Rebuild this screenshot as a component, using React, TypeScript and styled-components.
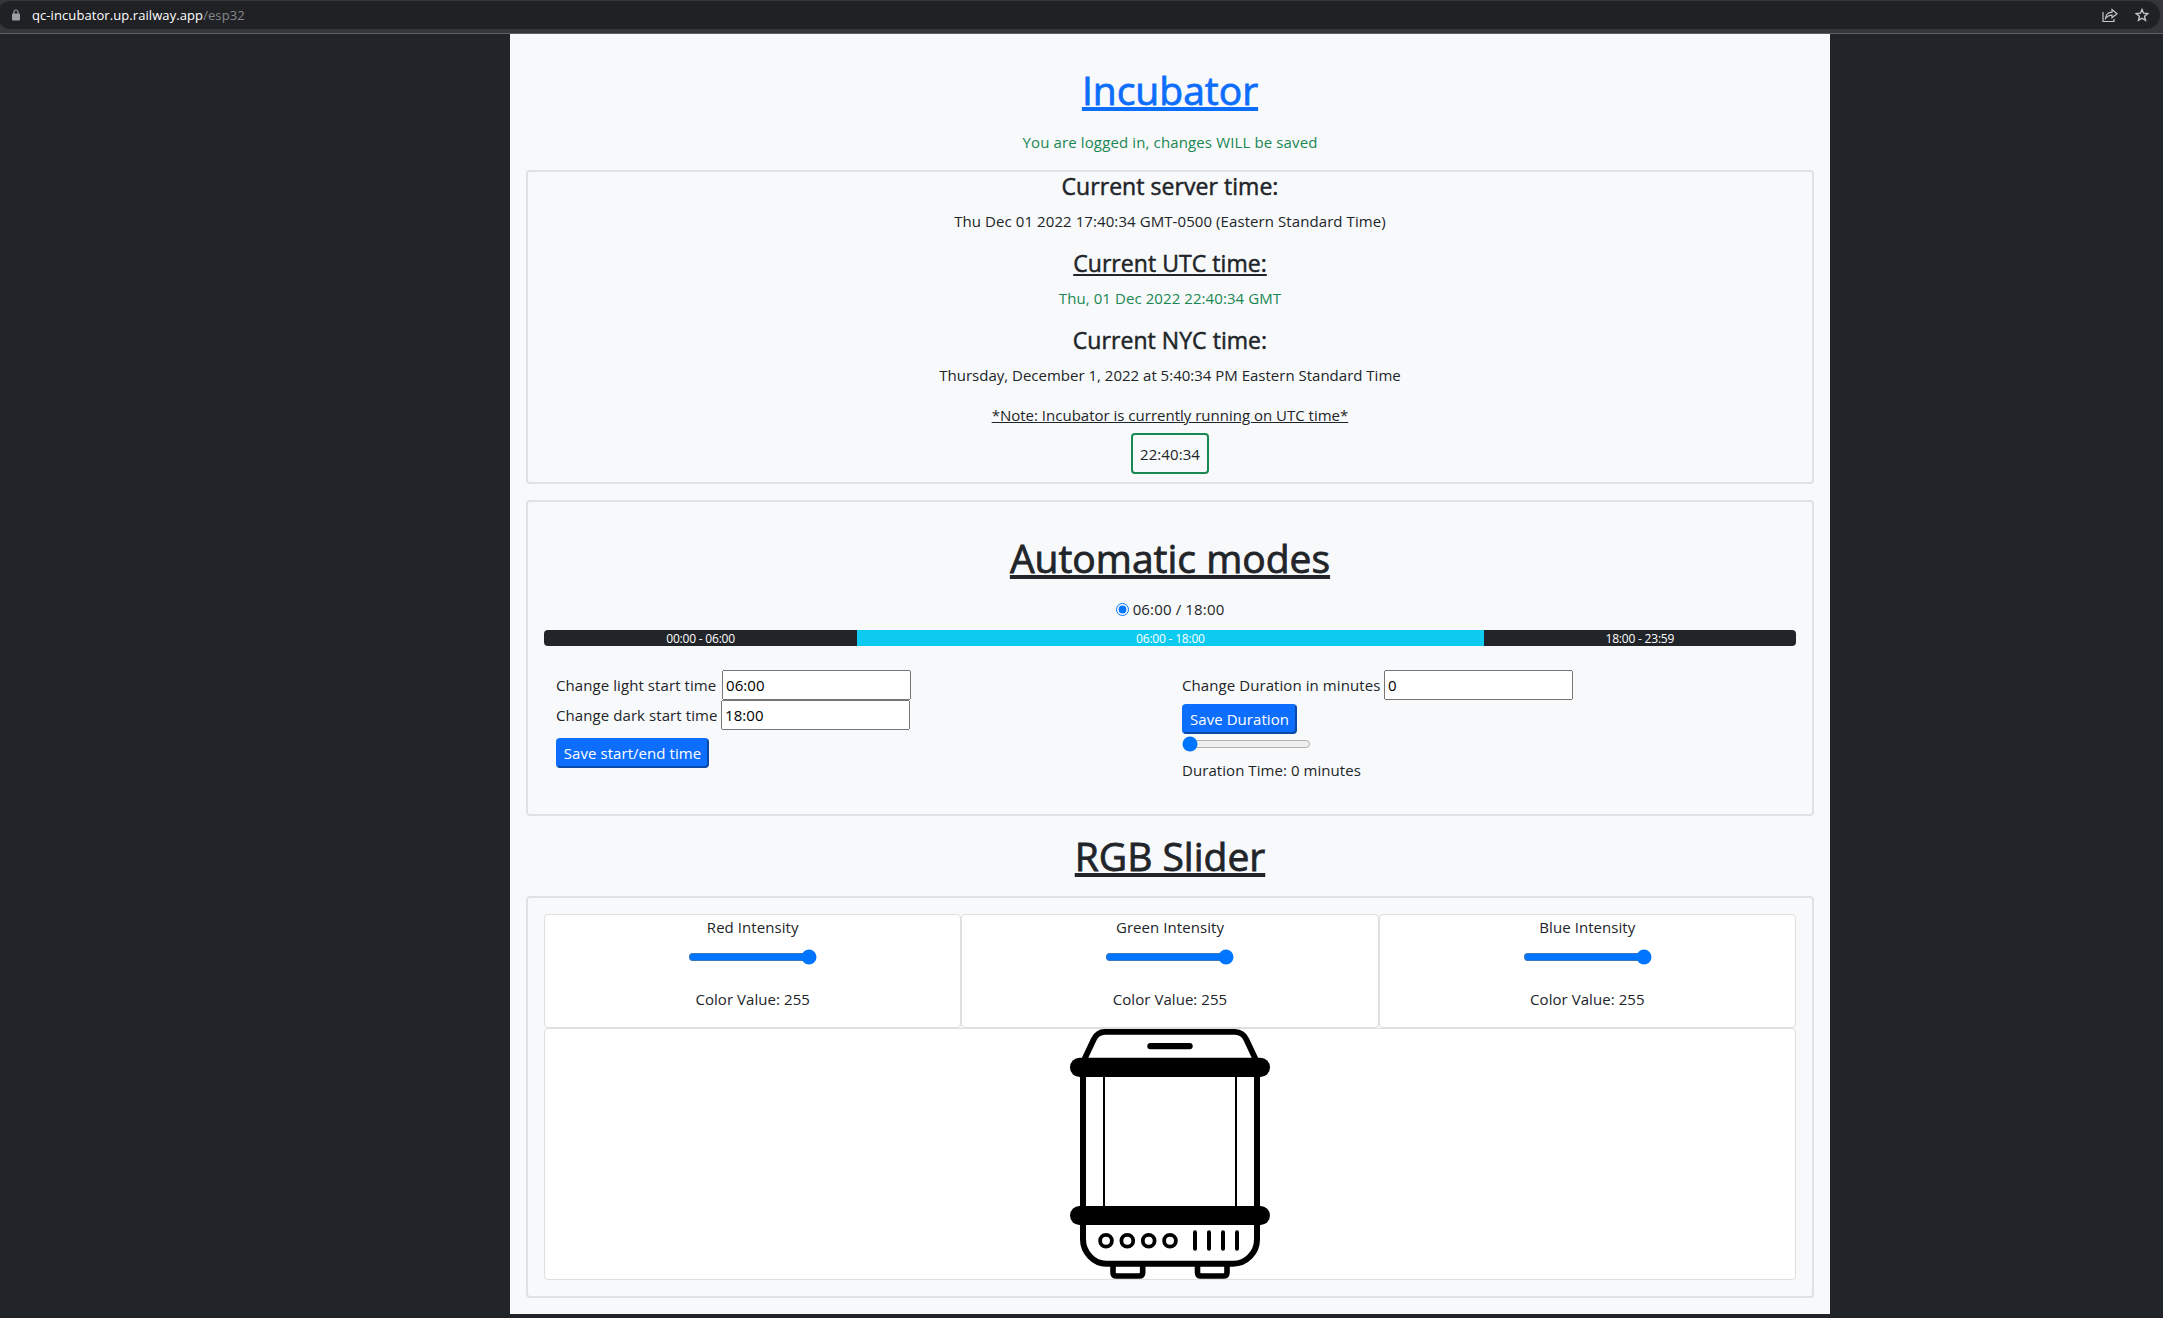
import React, { useState } from "react";
import styled, { createGlobalStyle } from "styled-components";

const GlobalStyle = createGlobalStyle`
  *, *::before, *::after { box-sizing: border-box; }
  html { background: #212529; }
  body {
    margin: 0;
    background: #212529;
    color: #212529;
    font: 400 15px/24px "Open Sans", "Noto Sans", sans-serif;
    letter-spacing: 0.06px;
  }
  input, button { margin: 0; font: inherit; letter-spacing: inherit; }
`;

const Screen = styled.div`
  height: 1318px;
  overflow: hidden;
  border-bottom: 1px solid #231f25;
`;
const Toolbar = styled.header`
  height: 34px;
  padding: 1px 3px 0 0;
  background: #35363a;
  border-bottom: 1px solid #5f6063;
`;
const AddressBar = styled.div`
  display: flex;
  align-items: center;
  height: 28px;
  margin-left: -3px;
  padding: 0 11px 0 15px;
  border-radius: 14px;
  background: #202124;
  color: #9aa0a6;
`;
const Url = styled.span`
  flex: 1;
  margin-left: 12px;
  font-size: 13px;
  line-height: 20px;
  letter-spacing: 0.08px;
  color: #85888c;
`;
const Host = styled.span`color: #fff;`;
const Actions = styled.div`display: flex; align-items: center; gap: 17px; color: #c4c7c9;`;

const Container = styled.main`
  width: 1320px;
  height: 1280px;
  margin: 0 0 0 510px;
  padding: 32px 16px 0;
  background: #f8f9fa;
`;
const Title = styled.h1<{ $color?: string; $top?: number; $bottom?: number }>`
  margin: ${(p) => p.$top ?? 0}px 0 ${(p) => p.$bottom ?? 0}px;
  height: 48px;
  text-align: center;
  font-size: 39px;
  line-height: 48px;
  font-weight: 500;
  letter-spacing: 0;
  -webkit-text-stroke: 0.8px currentColor;
  color: ${(p) => p.$color ?? "#212529"};
  text-decoration: underline;
  text-decoration-thickness: 4px;
  text-underline-offset: 2px;
  text-decoration-skip-ink: none;
`;
const Line = styled.p<{ $color?: string; $track?: number; $underline?: boolean }>`
  margin: 0 0 16px;
  text-align: center;
  color: ${(p) => p.$color ?? "inherit"};
  letter-spacing: ${(p) => p.$track ?? 0.08}px;
  text-decoration: ${(p) => (p.$underline ? "underline" : "none")};
  text-underline-offset: 1px;
`;
const Subtitle = styled.h4<{ $underline?: boolean }>`
  margin: 0 0 8px;
  text-align: center;
  font-size: 23px;
  line-height: 29px;
  font-weight: 500;
  letter-spacing: 0.05px;
  -webkit-text-stroke: 0.5px currentColor;
  text-decoration: ${(p) => (p.$underline ? "underline" : "none")};
  text-decoration-thickness: 2px;
  text-underline-offset: 2px;
`;
const Panel = styled.section<{ $height: number; $pad?: string; $mt?: number }>`
  height: ${(p) => p.$height}px;
  margin-top: ${(p) => p.$mt ?? 0}px;
  padding: ${(p) => p.$pad ?? "0"};
  border: 2px solid #dee2e6;
  border-radius: 4px;
`;
const Clock = styled.div`
  width: 78px;
  height: 41px;
  margin: -10px auto 0;
  border: 2px solid #198754;
  border-radius: 4px;
  text-align: center;
  line-height: 38px;
`;
const Mode = styled.label`
  display: flex;
  justify-content: center;
  align-items: center;
  gap: 4px;
  height: 24px;
  margin-top: 15px;
  letter-spacing: 0.15px;
`;
const Radio = styled.input`width: 13px; height: 13px;`;
const Progress = styled.div`
  display: flex;
  height: 16px;
  margin-top: 9px;
  border-radius: 4px;
  overflow: hidden;
  font-size: 12px;
  line-height: 17px;
  letter-spacing: -0.2px;
  color: #fff;
  text-align: center;
`;
const Segment = styled.div<{ $share: number; $light?: boolean }>`
  flex: ${(p) => p.$share} 1 0;
  background: ${(p) => (p.$light ? "#0dcaf0" : "#212529")};
`;
const Settings = styled.div`
  display: grid;
  grid-template-columns: 1fr 1fr;
  padding-top: 24px;
`;
const Column = styled.div`padding: 0 12px;`;
const Field = styled.label`
  display: flex;
  align-items: center;
  gap: 4px;
  height: 30px;
`;
const FieldLabel = styled.span<{ $width: number }>`
  width: ${(p) => p.$width}px;
  white-space: nowrap;
  letter-spacing: 0.08px;
`;
const TextInput = styled.input`
  width: 189px;
  height: 30px;
  padding: 1px 2px;
`;
const SaveButton = styled.button<{ $width: number; $top: number }>`
  display: block;
  width: ${(p) => p.$width}px;
  height: 30px;
  margin-top: ${(p) => p.$top}px;
  padding: 0;
  border: 2px outset #0d6efd;
  border-radius: 4px;
  background: #0d6efd;
  color: #fff;
  line-height: 26px;
`;
const Range = styled.input`
  display: block;
  width: 129px;
  height: 16px;
`;
const Duration = styled.div`padding-top: 2px;`;
const DurationText = styled.p`margin: 6px 0 0;`;

const Cards = styled.div`display: grid; grid-template-columns: repeat(3, 1fr);`;
const Card = styled.div`
  display: flex;
  flex-direction: column;
  align-items: center;
  height: 114px;
  border: 1px solid #dfdfdf;
  border-radius: 4px;
  background: #fff;
`;
const CardLine = styled.span<{ $top?: number }>`
  margin-top: ${(p) => p.$top ?? 0}px;
`;
const CardRange = styled(Range)`margin-top: 10px;`;
const Picture = styled(Card)`height: 252px;`;

const Incubator = () => (
  <svg width="200" height="250" viewBox="0 0 200 250" fill="none" stroke="#000">
    <path d="M14.5 30 23.7 10.5Q27.2 3 35 2.9H165Q172.8 3 176.3 10.5L185.5 30" strokeWidth="5.8" />
    <rect x="77.3" y="14" width="45.4" height="6.2" rx="3" fill="#000" stroke="none" />
    <path d="M13 45V210.5Q13 220 20 227.5T37 234.7H163Q173 234.7 180 227.5T187 210.5V45" strokeWidth="6" />
    <path d="M34 45V180M166 45V180" strokeWidth="2" />
    <g fill="#000" stroke="none">
      <rect x="0" y="28.7" width="200" height="19.3" rx="9.6" />
      <rect x="0" y="177" width="200" height="19" rx="9.5" />
    </g>
    <g strokeWidth="3.8">
      {[36, 57.3, 78.7, 100].map((x) => <circle key={x} cx={x} cy="211.7" r="5.9" />)}
    </g>
    <g strokeWidth="4" strokeLinecap="round">
      {[125, 139, 153, 167].map((x) => <path key={x} d={`M${x} 203.3V219.7`} />)}
    </g>
    <path d="M43 237V243.5Q43 247 46.5 247H69Q72.7 247 72.7 243.5V237M127.5 237V243.5Q127.5 247 131 247H153.5Q157 247 157 243.5V237" strokeWidth="5.6" />
  </svg>
);

const LockIcon = () => (
  <svg width="8" height="12" viewBox="0 0 8 12">
    <path d="M2 5V3a2 2 0 0 1 4 0v2" fill="none" stroke="currentColor" strokeWidth="1.2" />
    <rect y="4.5" width="8" height="7" rx="1" fill="currentColor" />
  </svg>
);
const ShareIcon = () => (
  <svg width="16" height="15" viewBox="0 0 16 15" fill="none" stroke="currentColor" strokeWidth="1.2">
    <path d="M1 4V13.5H12V11" />
    <path d="M3.5 10.5Q4 4.5 10 4.2V1.5L15 5.8 10 9.8V7.2Q6 7.2 3.5 10.5Z" />
  </svg>
);
const StarIcon = () => (
  <svg width="14" height="14" viewBox="0 0 14 14" fill="none" stroke="currentColor" strokeWidth="1.4">
    <path d="M7 1.5 8.6 5.2 12.7 5.6 9.6 8.3 10.5 12.3 7 10.2 3.5 12.3 4.4 8.3 1.3 5.6 5.4 5.2Z" />
  </svg>
);

function ColorCard({ name }: { name: string }) {
  const [value, setValue] = useState(255);
  return (
    <Card>
      <CardLine>{name} Intensity</CardLine>
      <CardRange type="range" min={0} max={255} value={value} onChange={(e) => setValue(Number(e.target.value))} />
      <CardLine $top={22}>Color Value: {value}</CardLine>
    </Card>
  );
}

export default function App() {
  const [minutes, setMinutes] = useState(0);
  return (
    <Screen>
      <GlobalStyle />
      <Toolbar>
        <AddressBar>
          <LockIcon />
          <Url><Host>qc-incubator.up.railway.app</Host>/esp32</Url>
          <Actions><ShareIcon /><StarIcon /></Actions>
        </AddressBar>
      </Toolbar>
      <Container>
        <Title $color="#0d6efd" $bottom={16}>Incubator</Title>
        <Line $color="#198754" $track={0.13}>You are logged in, changes WILL be saved</Line>
        <Panel $height={314}>
          <Subtitle>Current server time:</Subtitle>
          <Line>Thu Dec 01 2022 17:40:34 GMT-0500 (Eastern Standard Time)</Line>
          <Subtitle $underline>Current UTC time:</Subtitle>
          <Line $color="#198754">Thu, 01 Dec 2022 22:40:34 GMT</Line>
          <Subtitle>Current NYC time:</Subtitle>
          <Line $track={0}>Thursday, December 1, 2022 at 5:40:34 PM Eastern Standard Time</Line>
          <Line $underline $track={0}>*Note: Incubator is currently running on UTC time*</Line>
          <Clock>22:40:34</Clock>
        </Panel>
        <Panel $height={316} $mt={16} $pad="32px 16px 0">
          <Title>Automatic modes</Title>
          <Mode><Radio type="radio" defaultChecked />06:00 / 18:00</Mode>
          <Progress>
            <Segment $share={25}>00:00 - 06:00</Segment>
            <Segment $share={50} $light>06:00 - 18:00</Segment>
            <Segment $share={24.93}>18:00 - 23:59</Segment>
          </Progress>
          <Settings>
            <Column>
              <Field><FieldLabel $width={162}>Change light start time</FieldLabel><TextInput defaultValue="06:00" /></Field>
              <Field><FieldLabel $width={161}>Change dark start time</FieldLabel><TextInput defaultValue="18:00" /></Field>
              <SaveButton $width={153} $top={8}>Save start/end time</SaveButton>
            </Column>
            <Column>
              <Field><FieldLabel $width={198}>Change Duration in minutes</FieldLabel><TextInput value={minutes} onChange={(e) => setMinutes(Number(e.target.value) || 0)} /></Field>
              <SaveButton $width={115} $top={4}>Save Duration</SaveButton>
              <Duration>
                <Range type="range" min={0} max={1440} value={minutes} onChange={(e) => setMinutes(Number(e.target.value))} />
                <DurationText>Duration Time: {minutes} minutes</DurationText>
              </Duration>
            </Column>
          </Settings>
        </Panel>
        <Title $top={16}>RGB Slider</Title>
        <Panel $height={402} $mt={16} $pad="16px 16px 0">
          <Cards><ColorCard name="Red" /><ColorCard name="Green" /><ColorCard name="Blue" /></Cards>
          <Picture><Incubator /></Picture>
        </Panel>
      </Container>
    </Screen>
  );
}
